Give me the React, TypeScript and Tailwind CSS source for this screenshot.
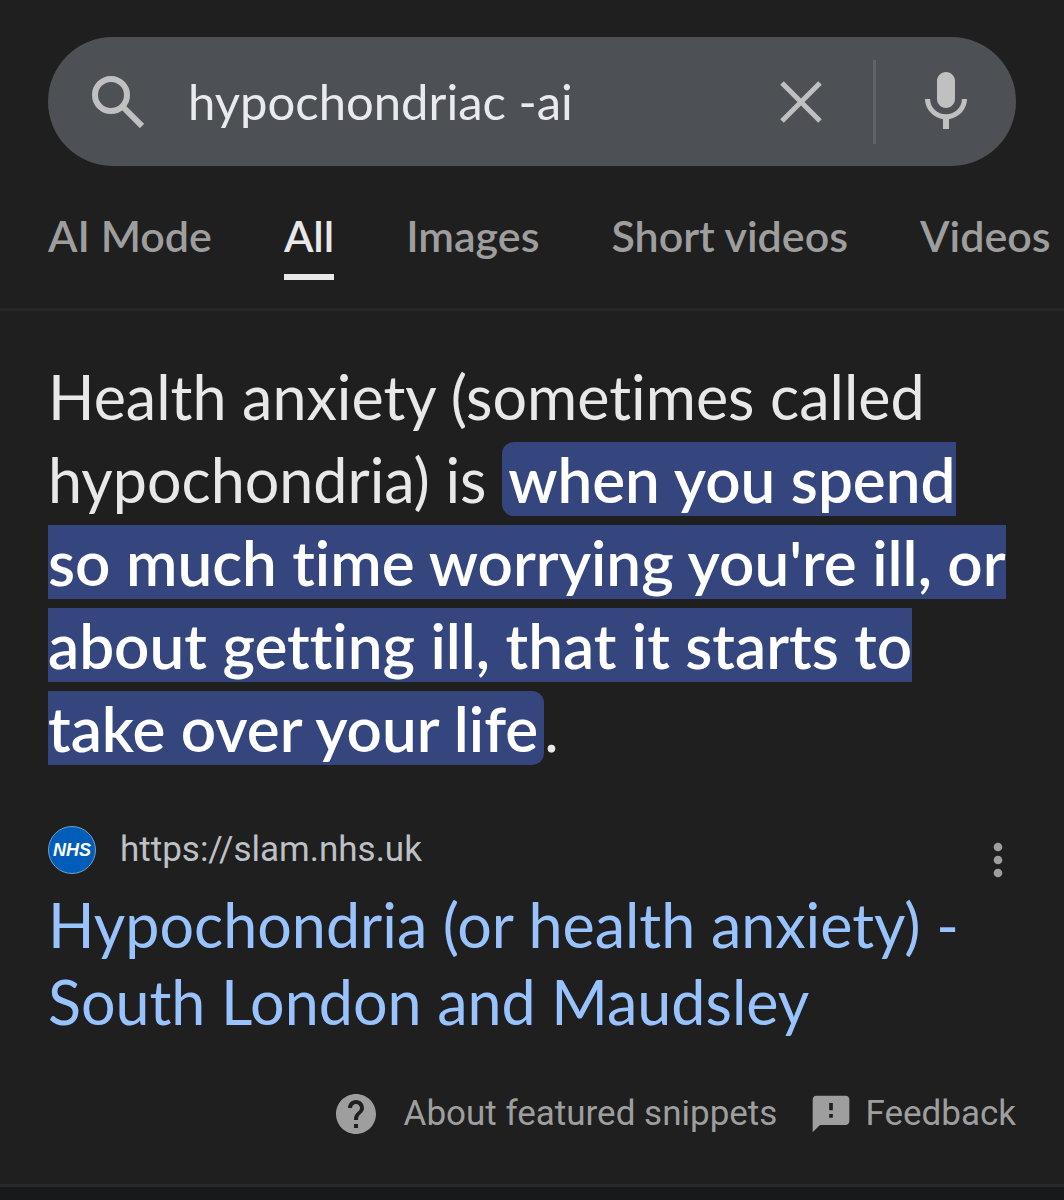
import { useState } from "react"
import { MdFeedback, MdHelp, MdMic, MdMoreVert } from "react-icons/md"

const tabs = ["AI Mode", "All", "Images", "Short videos", "Videos"]

function SearchBar() {
  const [query, setQuery] = useState("hypochondriac -ai")

  return (
    <form
      role="search"
      onSubmit={(e) => e.preventDefault()}
      className="mx-12 flex h-[129px] items-center rounded-full bg-[#4d5055] pl-11 text-[#c0c0c0]"
    >
      <button type="submit" aria-label="Search" className="shrink-0">
        <svg viewBox="0 0 52 52" className="size-13" fill="none" stroke="currentColor" strokeWidth="6">
          <circle cx="19" cy="19" r="16" />
          <path d="M32 32l18 18" />
        </svg>
      </button>
      <input
        type="text"
        aria-label="Search query"
        value={query}
        onChange={(e) => setQuery(e.target.value)}
        className="ml-11 min-w-0 flex-1 bg-transparent text-[49px] text-[#e8eaed] outline-none"
      />
      <button type="button" aria-label="Clear" onClick={() => setQuery("")} className="shrink-0 px-[50px]">
        <svg viewBox="0 0 44 44" className="size-11" fill="none" stroke="currentColor" strokeWidth="5">
          <path d="M3 3l38 38M41 3L3 41" />
        </svg>
      </button>
      <div className="h-21 w-[3px] bg-[#606368]" />
      <button type="button" aria-label="Search by voice" className="shrink-0 px-[34px]">
        <MdMic className="size-18" />
      </button>
    </form>
  )
}

function Tabs() {
  return (
    <nav className="flex gap-18 overflow-hidden border-b-3 border-[#24282b] px-12 pt-11 pb-7 text-[43px] leading-13 font-semibold whitespace-nowrap text-[#9e9e9e]">
      {tabs.map((tab) => (
        <a
          key={tab}
          href="#"
          aria-current={tab === "All" ? "page" : undefined}
          className={
            tab === "All"
              ? "border-b-6 border-[#e8e8e8] pb-3 text-[#e8e8e8]"
              : "border-b-6 border-transparent pb-3"
          }
        >
          {tab}
        </a>
      ))}
    </nav>
  )
}

function FeaturedSnippet() {
  return (
    <article className="px-12 pt-11">
      <p className="text-[61px] leading-[83px] text-[#e8e8e8] [font-variant-ligatures:none]">
        Health anxiety (sometimes called hypochondria) is{" "}
        <mark className="rounded-xl bg-[#35467f] px-[6px] text-[62px] font-semibold text-white">
          when you spend so much time worrying you're ill, or about getting ill, that it starts to take over your life
        </mark>
        .
      </p>

      <div className="mt-14 flex items-start font-['Roboto',sans-serif]">
        <span className="flex size-12 items-center justify-center rounded-full border border-[#6f9fd0] bg-[#005eb8] font-['Liberation_Sans',sans-serif] text-lg font-bold text-white italic">
          NHS
        </span>
        <cite className="ml-6 text-[35px] leading-12 text-[#bdc1c6] not-italic">https://slam.nhs.uk</cite>
        <button type="button" aria-label="About this result" className="mt-2 -mr-2 ml-auto text-[#9e9e9e]">
          <MdMoreVert className="size-13" />
        </button>
      </div>

      <h3 className="text-[61px] leading-[77px] text-[#99c3ff]">
        <a href="#">Hypochondria (or health anxiety) - South London and Maudsley</a>
      </h3>

      <footer className="mt-[50px] flex items-center justify-end gap-8 pb-[46px] font-['Roboto',sans-serif] text-[35px] leading-12 text-[#9e9e9e]">
        <a href="#" className="flex items-center gap-6">
          <MdHelp className="size-12" />
          About featured snippets
        </a>
        <a href="#" className="flex items-center gap-3">
          <MdFeedback className="size-11" />
          Feedback
        </a>
      </footer>
    </article>
  )
}

export default function App() {
  return (
    <div className="min-h-screen bg-[#18191a] font-['Lato',sans-serif]">
      <main className="border-b-3 border-[#28292b] bg-[#1f1f1f] pt-[37px]">
        <SearchBar />
        <Tabs />
        <FeaturedSnippet />
      </main>
    </div>
  )
}
